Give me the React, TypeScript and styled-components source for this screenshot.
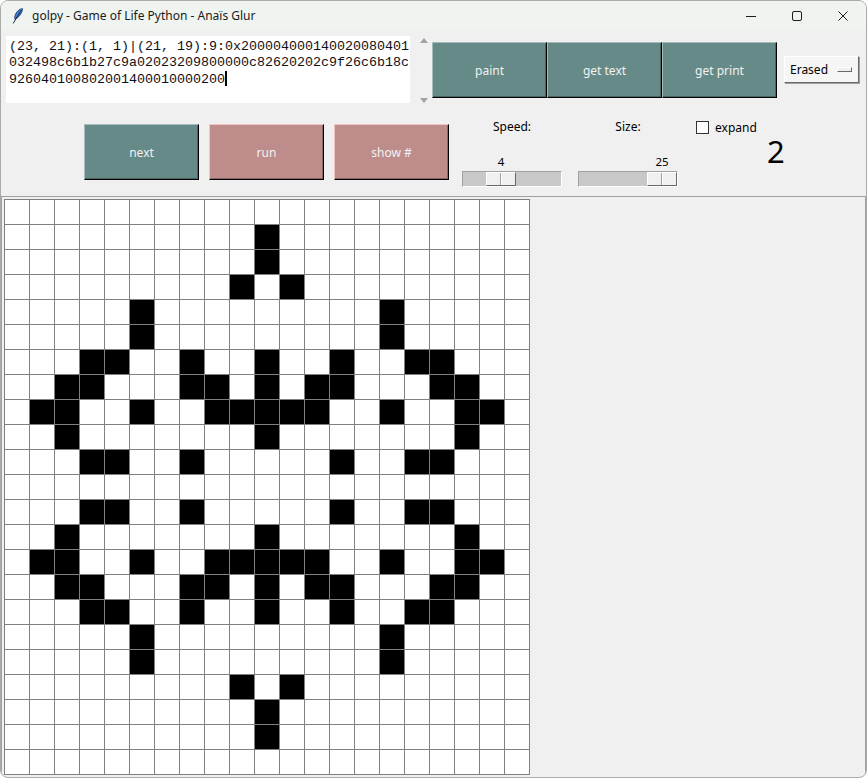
import React from "react";
import styled, { createGlobalStyle } from "styled-components";

//--------------Data--------------

const TEXT_LINES = [
  "(23, 21):(1, 1)|(21, 19):9:0x200004000140020080401",
  "032498c6b1b27c9a02023209800000c82620202c9f26c6b18c",
  "926040100802001400010000200",
];

const HALF = [
  ".....................",
  "..........#..........",
  "..........#..........",
  ".........#.#.........",
  ".....#.........#.....",
  ".....#.........#.....",
  "...##..#..#..#..##...",
  "..##...##.#.##...##..",
  ".##..#..#####..#..##.",
  "..#.......#.......#..",
  "...##..#.....#..##...",
];

// 23 rows x 21 cols, mirrored around the middle row
const BOARD = [
  ...HALF,
  ".....................",
  ...HALF.slice(1).reverse(),
  ".....................",
];

//--------------Styled Components--------------

const GlobalStyle = createGlobalStyle`
  html, body {
    margin: 0;
    padding: 0;
    background: #ffffff;
  }
  body {
    font-family: "Noto Sans", "Liberation Sans", sans-serif;
  }
`;

const Window = styled.div`
  width: 867px;
  height: 778px;
  box-sizing: border-box;
  border: 1px solid #a8aba8;
  border-radius: 8px;
  overflow: hidden;
  display: flex;
  flex-direction: column;
  background: #f0f0f0;
`;

const TitleBar = styled.div`
  height: 29px;
  flex-shrink: 0;
  display: flex;
  align-items: center;
  background: #eff4f0;
`;

const AppIcon = styled.svg`
  margin-left: 11px;
  width: 11px;
  height: 16px;
`;

const TitleText = styled.div`
  margin-left: 9px;
  font-size: 12px;
  color: #1b1b1b;
  flex: 1;
`;

const CaptionButton = styled.div`
  width: 46px;
  height: 29px;
  display: flex;
  align-items: center;
  justify-content: center;
`;

const Body = styled.div`
  flex: 1;
  display: flex;
  flex-direction: column;
  min-height: 0;
`;

const TopRow = styled.div`
  height: 78px;
  flex-shrink: 0;
  display: flex;
  align-items: flex-start;
  padding-left: 5px;
`;

const TextBox = styled.div`
  margin-top: 6px;
  width: 404px;
  height: 67px;
  box-sizing: border-box;
  padding: 2.5px 3px 0;
  background: #ffffff;
  font-family: "Liberation Mono", "DejaVu Sans Mono", monospace;
  font-size: 13.33px;
  line-height: 16.3px;
  color: #101018;
  white-space: pre;
`;

const Cursor = styled.span`
  display: inline-block;
  width: 2px;
  height: 15px;
  background: #000;
  vertical-align: -3px;
`;

const ScrollBar = styled.div`
  margin-left: 5px;
  margin-top: 5px;
  width: 17px;
  height: 70px;
  box-sizing: border-box;
  padding: 3px 0 2px;
  display: flex;
  flex-direction: column;
  justify-content: space-between;
  align-items: center;
`;

const Arrow = styled.div<{ $down?: boolean }>`
  width: 0;
  height: 0;
  border-left: 4px solid transparent;
  border-right: 4px solid transparent;
  ${(p) =>
    p.$down
      ? "border-top: 5px solid #a3a3a3;"
      : "border-bottom: 5px solid #a3a3a3;"}
`;

const ButtonGroup = styled.div<{ $gap?: number; $top: number }>`
  display: flex;
  gap: ${(p) => p.$gap ?? 0}px;
  margin-top: ${(p) => p.$top}px;
`;

const TkButton = styled.div<{ $tone: "teal" | "rose" }>`
  width: 115px;
  height: 56px;
  box-sizing: border-box;
  display: flex;
  align-items: center;
  justify-content: center;
  font-size: 12px;
  color: #f2f2f2;
  background: ${(p) => (p.$tone === "teal" ? "#668a87" : "#bd8c8b")};
  border: 1px solid;
  border-color: ${(p) =>
    p.$tone === "teal"
      ? "#a3bcba #000 #000 #a3bcba"
      : "#f3c4c4 #000 #000 #f3c4c4"};
  box-shadow: inset -1px -1px 0
    ${(p) => (p.$tone === "teal" ? "#4a6563" : "#8a6766")};
`;

const OptionMenu = styled.div`
  margin-left: 7px;
  margin-top: 26px;
  width: 75px;
  height: 27px;
  box-sizing: border-box;
  display: flex;
  align-items: center;
  padding-left: 5px;
  font-size: 12px;
  color: #000;
  background: #f5f5f5;
  border: 1px solid;
  border-color: #ffffff #696969 #696969 #ffffff;
  box-shadow: 1px 1px 0 #a0a0a0;
`;

const OptionIndicator = styled.div`
  margin-left: auto;
  margin-right: 6px;
  width: 15px;
  height: 5px;
  box-sizing: border-box;
  background: #f0f0f0;
  border: 1px solid;
  border-color: #ffffff #696969 #696969 #ffffff;
`;

const ControlRow = styled.div`
  height: 88px;
  flex-shrink: 0;
  display: flex;
  align-items: flex-start;
  padding-left: 83px;
`;

const ScaleColumn = styled.div<{ $left: number }>`
  width: 100px;
  margin-left: ${(p) => p.$left}px;
  display: flex;
  flex-direction: column;
`;

const SmallLabel = styled.div`
  margin-top: 10px;
  height: 18px;
  line-height: 18px;
  font-size: 12px;
  text-align: center;
  color: #000;
`;

const ValueRow = styled.div`
  margin-top: 19px;
  height: 14px;
  display: flex;
`;

const ValueText = styled.div`
  width: 30px;
  text-align: center;
  font-size: 11.5px;
  line-height: 14px;
  color: #000;
`;

const Trough = styled.div`
  margin-top: 2px;
  width: 100px;
  height: 16px;
  box-sizing: border-box;
  display: flex;
  background: #c8c8c8;
  border: 1px solid;
  border-color: #a0a0a0 #ffffff #ffffff #a0a0a0;
`;

const Thumb = styled.div`
  width: 30px;
  height: 100%;
  box-sizing: border-box;
  display: flex;
  justify-content: center;
  background: #f0f0f0;
  border: 1px solid;
  border-color: #ffffff #696969 #696969 #ffffff;
`;

const ThumbGroove = styled.div`
  width: 1px;
  height: 100%;
  background: #a0a0a0;
  border-right: 1px solid #ffffff;
`;

const CheckRow = styled.div`
  margin-left: 18px;
  margin-top: 10px;
  height: 18px;
  width: 57px;
  display: flex;
  align-items: center;
  gap: 6px;
  font-size: 12px;
  color: #000;
  white-space: nowrap;
`;

const CheckBox = styled.div`
  width: 13px;
  height: 13px;
  flex-shrink: 0;
  box-sizing: border-box;
  background: #ffffff;
  border: 1px solid #333333;
`;

const BigNumber = styled.div`
  margin-left: 14px;
  margin-top: 28px;
  font-size: 31px;
  line-height: 31px;
  color: #000;
`;

const CanvasFrame = styled.div`
  flex: 1;
  min-height: 0;
  border: 1px solid #a0a0a0;
  border-bottom: none;
  padding: 2px 0 0 2px;
  overflow: hidden;
`;

const Board = styled.div`
  display: grid;
  grid-template-columns: repeat(21, 25px);
  grid-auto-rows: 25px;
  width: max-content;
  border-left: 1px solid #808080;
  border-top: 1px solid #808080;
`;

const Cell = styled.div<{ $alive: boolean }>`
  box-sizing: border-box;
  border-right: 1px solid #808080;
  border-bottom: 1px solid #808080;
  background: ${(p) => (p.$alive ? "#000000" : "#ffffff")};
`;

//============================================

function Scale({
  label,
  value,
  offset,
  left,
}: {
  label: string;
  value: string;
  offset: number;
  left: number;
}) {
  return (
    <ScaleColumn $left={left}>
      <SmallLabel>{label}</SmallLabel>
      <ValueRow>
        {/* value label follows the thumb */}
        <ValueText style={{ marginLeft: offset }}>{value}</ValueText>
      </ValueRow>
      <Trough>
        <Thumb style={{ marginLeft: offset - 1 }}>
          <ThumbGroove />
        </Thumb>
      </Trough>
    </ScaleColumn>
  );
}

function App() {
  return (
    <Window>
      <GlobalStyle />
      <TitleBar>
        <AppIcon viewBox="0 0 11 16">
          <path
            d="M10.4 0.6 C7.6 0.9 4.2 3.6 3 7.6 C2.6 9 2.6 10.4 3 11.4 C5.8 10.2 8.8 6.8 10 3.6 C10.4 2.6 10.5 1.6 10.4 0.6 Z"
            fill="#3f7fd8"
            stroke="#1d3466"
            strokeWidth="0.8"
          />
          <path d="M9.2 2.2 L1.2 15.4" stroke="#1a2a4d" strokeWidth="1" />
        </AppIcon>
        <TitleText>golpy - Game of Life Python - Anaïs Glur</TitleText>
        <CaptionButton>
          <svg width="10" height="10" viewBox="0 0 10 10">
            <path d="M0 5.5 H10" stroke="#1b1b1b" strokeWidth="1" />
          </svg>
        </CaptionButton>
        <CaptionButton>
          <svg width="10" height="10" viewBox="0 0 10 10">
            <rect x="0.5" y="0.5" width="9" height="9" rx="1.5" fill="none" stroke="#1b1b1b" strokeWidth="1" />
          </svg>
        </CaptionButton>
        <CaptionButton>
          <svg width="10" height="10" viewBox="0 0 10 10">
            <path d="M0.5 0.5 L9.5 9.5 M9.5 0.5 L0.5 9.5" stroke="#1b1b1b" strokeWidth="1" />
          </svg>
        </CaptionButton>
      </TitleBar>

      <Body>
        <TopRow>
          <TextBox>
            {TEXT_LINES.map((line, i) => (
              <div key={i}>
                {line}
                {i === TEXT_LINES.length - 1 && <Cursor />}
              </div>
            ))}
          </TextBox>
          <ScrollBar>
            <Arrow />
            <Arrow $down />
          </ScrollBar>
          <ButtonGroup $top={12}>
            <TkButton $tone="teal">paint</TkButton>
            <TkButton $tone="teal">get text</TkButton>
            <TkButton $tone="teal">get print</TkButton>
          </ButtonGroup>
          <OptionMenu>
            Erased
            <OptionIndicator />
          </OptionMenu>
        </TopRow>

        <ControlRow>
          <ButtonGroup $top={16} $gap={10}>
            <TkButton $tone="teal">next</TkButton>
            <TkButton $tone="rose">run</TkButton>
            <TkButton $tone="rose">show #</TkButton>
          </ButtonGroup>
          <Scale label="Speed:" value="4" offset={24} left={13} />
          <Scale label="Size:" value="25" offset={69} left={16} />
          <CheckRow>
            <CheckBox />
            expand
          </CheckRow>
          <BigNumber>2</BigNumber>
        </ControlRow>

        <CanvasFrame>
          <Board>
            {BOARD.map((row, r) =>
              row
                .split("")
                .map((ch, c) => <Cell key={`${r}-${c}`} $alive={ch === "#"} />)
            )}
          </Board>
        </CanvasFrame>
      </Body>
    </Window>
  );
}

export default App;
